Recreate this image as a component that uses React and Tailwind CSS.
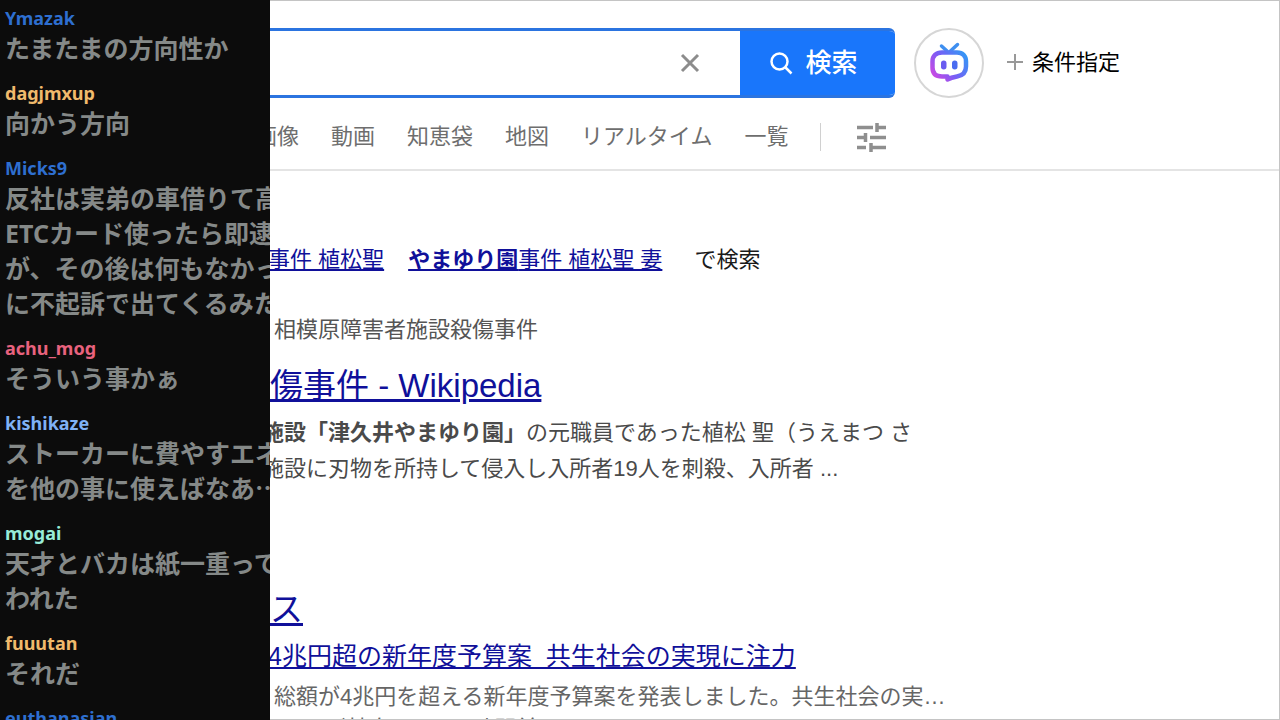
import React, { useState } from "react";

const messages = [
  { user: "Ymazak", color: "text-[#2e6fd0]", lines: ["たまたまの方向性か"] },
  { user: "dagjmxup", color: "text-[#f0ba6c]", lines: ["向かう方向"] },
  {
    user: "Micks9",
    color: "text-[#2e6fd0]",
    lines: [
      "反社は実弟の車借りて高",
      "ETCカード使ったら即逮",
      "が、その後は何もなかっ",
      "に不起訴で出てくるみた",
    ],
  },
  { user: "achu_mog", color: "text-[#e8627e]", lines: ["そういう事かぁ"] },
  {
    user: "kishikaze",
    color: "text-[#7fb2f5]",
    lines: ["ストーカーに費やすエネ", "を他の事に使えばなあ⋯"],
  },
  {
    user: "mogai",
    color: "text-[#98ecd8]",
    lines: ["天才とバカは紙一重って", "われた"],
  },
  { user: "fuuutan", color: "text-[#f0ba6c]", lines: ["それだ"] },
  { user: "euthanasian", color: "text-[#2e6fd0]", lines: [] },
];

const tabs = ["画像", "動画", "知恵袋", "地図", "リアルタイム", "一覧"];

const ChatPanel = () => (
  <aside className="w-[270px] shrink-0 overflow-hidden bg-[#0c0c0c] pl-[5px] pt-[5px] font-['Noto_Sans','Noto_Sans_CJK_JP',sans-serif]">
    {messages.map((message) => (
      <div key={message.user} className="mb-[14px] whitespace-nowrap">
        <p className={`text-[18px] leading-[26px] font-bold ${message.color}`}>
          {message.user}
        </p>
        {message.lines.map((line) => (
          <p
            key={line}
            className="text-[25px] leading-[35px] font-bold text-[#858988]"
          >
            {line}
          </p>
        ))}
      </div>
    ))}
  </aside>
);

const AssistantIcon = () => (
  <svg width="42" height="42" viewBox="0 0 42 42" fill="none" aria-hidden="true">
    <defs>
      <linearGradient id="botStroke" x1="3" y1="36" x2="38" y2="10" gradientUnits="userSpaceOnUse">
        <stop offset="0" stopColor="#d946e0" />
        <stop offset="0.45" stopColor="#7a5cf5" />
        <stop offset="1" stopColor="#2f9bf5" />
      </linearGradient>
    </defs>
    <path
      d="M19 9 13.500 4M22.500 9 29.500 2.500"
      stroke="#3f8ff0"
      strokeWidth="3.500"
      strokeLinecap="round"
    />
    <path
      d="M14 10.500h15c6 0 9 3.500 9 9v5c0 6-3 9-9 10-3 .5-6 1-9.500 3v-3H14c-6 0-9.500-3-9.500-9v-6c0-5.500 3.500-9 9.500-9Z"
      stroke="url(#botStroke)"
      strokeWidth="4.500"
      strokeLinejoin="round"
    />
    <rect x="13" y="18.500" width="5.500" height="9" rx="2.700" fill="#6a5cf0" />
    <rect x="24" y="18.500" width="5.500" height="9" rx="2.700" fill="#4a6cf0" />
  </svg>
);

const SearchHeader = () => {
  const [query, setQuery] = useState("");

  return (
    <header className="border-b-2 border-[#e4e4e4]">
      <div className="flex items-center pt-[27px]">
        <form
          className="flex h-[70px] w-[625px] overflow-hidden rounded-r-md border-y-3 border-[#2b74e0] bg-white"
          onSubmit={(e) => e.preventDefault()}
        >
          <input
            type="text"
            aria-label="検索キーワード"
            value={query}
            onChange={(e) => setQuery(e.target.value)}
            className="min-w-0 flex-1 px-3 text-[24px] outline-none"
          />
          <button
            type="button"
            aria-label="クリア"
            onClick={() => setQuery("")}
            className="flex w-[100px] items-center justify-center"
          >
            <svg width="20" height="20" viewBox="0 0 20 20" aria-hidden="true">
              <path d="M2 2 18 18M18 2 2 18" stroke="#8c8c8c" strokeWidth="3" />
            </svg>
          </button>
          <button
            type="submit"
            className="-my-[3px] flex w-[155px] items-center justify-center gap-3 bg-[#1976fb] pr-2 text-[26px] font-medium text-white"
          >
            <svg width="24" height="24" viewBox="0 0 24 24" fill="none" aria-hidden="true">
              <circle cx="10.500" cy="10.500" r="8" stroke="currentColor" strokeWidth="2.500" />
              <path d="M16.500 16.500 22.500 22.500" stroke="currentColor" strokeWidth="2.500" />
            </svg>
            検索
          </button>
        </form>
        <button
          type="button"
          aria-label="AIアシスタント"
          className="ml-[19px] flex size-[70px] items-center justify-center rounded-full border-2 border-[#d6d6d6]"
        >
          <AssistantIcon />
        </button>
        <button
          type="button"
          className="ml-[22px] flex items-center gap-2 pb-[2px] text-[22px] text-black"
        >
          <svg width="18" height="18" viewBox="0 0 18 18" aria-hidden="true">
            <path d="M9 1v16M1 9h16" stroke="#999" strokeWidth="2" />
          </svg>
          条件指定
        </button>
      </div>
      <nav className="-ml-[15px] flex items-center gap-8 pt-[22px] pb-4 text-[22px] leading-[33px] text-[#6e6e6e]">
        {tabs.map((tab) => (
          <a key={tab} href="#">
            {tab}
          </a>
        ))}
        <span className="h-7 w-px bg-[#d0d0d0]" />
        <button type="button" aria-label="検索ツール">
          <svg width="36" height="32" viewBox="0 0 36 32" aria-hidden="true">
            <path
              d="M4 6.500h16M24 6.500h9M24 2v9M4 16.500h9M17 16.500h16M12.500 12v9M4 26.500h9M18 26.500h15M18 22v9"
              stroke="#8f8f8f"
              strokeWidth="3.500"
            />
          </svg>
        </button>
      </nav>
    </header>
  );
};

const App = () => {
  return (
    <div className="flex h-screen overflow-hidden bg-white">
      <ChatPanel />
      <main className="min-w-0 flex-1 overflow-hidden border-y border-r border-[#c4c4c4] font-['Liberation_Sans','Noto_Sans_CJK_JP',sans-serif] whitespace-nowrap">
        <SearchHeader />

        <p className="-ml-[2px] mt-[72px] flex gap-6 text-[22px] leading-[33px] text-[#1a1a1a]">
          <a href="#" className="text-[#10109a] underline">
            事件 植松聖
          </a>
          <a href="#" className="text-[#10109a] underline">
            <b>やまゆり園</b>事件 植松聖 妻
          </a>
          <span className="ml-2">で検索</span>
        </p>

        <article className="mt-9">
          <p className="ml-1 text-[22px] leading-[36px] text-[#555]">
            相模原障害者施設殺傷事件
          </p>
          <h3 className="mt-[13px] text-[33px] leading-[50px] text-[#10109a]">
            <a href="#" className="underline">
              傷事件 - Wikipedia
            </a>
          </h3>
          <p className="-ml-2 mt-1 text-[22px] leading-[36px] text-[#4a4a4a]">
            <b>施設「津久井やまゆり園」</b>の元職員であった植松 聖（うえまつ さ
            <br />
            施設に刃物を所持して侵入し入所者19人を刺殺、入所者 ...
          </p>
        </article>

        <article className="mt-[98px]">
          <h3 className="text-[33px] leading-[50px] text-[#10109a]">
            <a href="#" className="underline">
              ス
            </a>
          </h3>
          <h4 className="-ml-[2px] mt-[2px] text-[25px] leading-[38px] text-[#10109a]">
            <a href="#" className="underline">
              4兆円超の新年度予算案&nbsp; 共生社会の実現に注力
            </a>
          </h4>
          <p className="ml-1 mt-[6px] text-[22px] leading-[32px] text-[#666]">
            総額が4兆円を超える新年度予算案を発表しました。共生社会の実…
            <br />
            (テレビ神奈川)<span className="mx-4">-</span>9時間前
          </p>
        </article>
      </main>
    </div>
  );
};

export default App;
